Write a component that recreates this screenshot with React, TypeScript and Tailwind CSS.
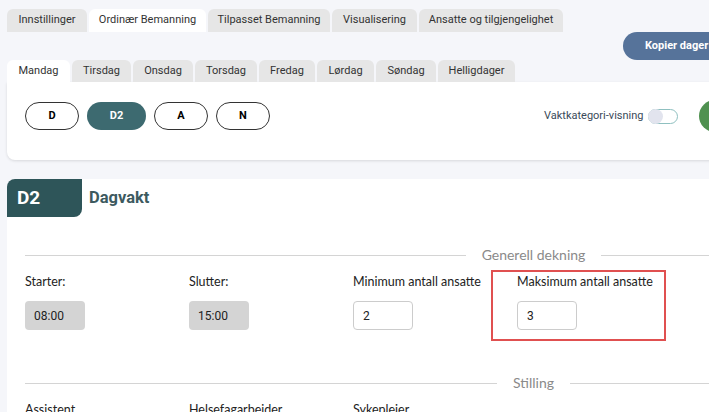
import React from 'react';

const topTabs = [
    { label: 'Innstillinger', w: 'w-[80px]' },
    { label: 'Ordinær Bemanning', w: 'w-[117px]' },
    { label: 'Tilpasset Bemanning', w: 'w-[122px]' },
    { label: 'Visualisering', w: 'w-[85px]' },
    { label: 'Ansatte og tilgjengelighet', w: 'w-[144px]' },
];
const dayTabs = [
    { label: 'Mandag', w: 'w-[63px]' },
    { label: 'Tirsdag', w: 'w-[59px]' },
    { label: 'Onsdag', w: 'w-[60px]' },
    { label: 'Torsdag', w: 'w-[62px]' },
    { label: 'Fredag', w: 'w-[56px]' },
    { label: 'Lørdag', w: 'w-[57px]' },
    { label: 'Søndag', w: 'w-[60px]' },
    { label: 'Helligdager', w: 'w-[77px]' },
];
const shifts = ['D', 'D2', 'A', 'N'];

function SectionTitle({ title }: { title: string }) {
    return (
        <div className="flex items-center gap-4 h-[14px]">
            <div className="flex-1 h-px bg-[#d4d4d4]" />
            <span className="text-[14px] text-[#8a8a8a] leading-none">{title}</span>
            <div className="flex-1 h-px bg-[#d4d4d4]" />
        </div>
    );
}

function Field({ label, value, disabled }: { label: string; value: string; disabled?: boolean }) {
    return (
        <>
            <div className="text-[12.5px] text-[#222] h-[18px] leading-[18px] whitespace-nowrap">{label}</div>
            <div
                className={`mt-[10px] w-[60px] h-[29px] rounded flex items-center pl-[9px] text-[12px] text-[#222] font-['Roboto',sans-serif] ${disabled ? 'bg-[#d4d4d4]' : 'border border-[#ccc]'}`}
            >
                {value}
            </div>
        </>
    );
}

export default function App() {
    return (
        <div className="w-full h-[412px] overflow-hidden bg-[#f5f6fa]">
            <div className="w-[1060px] pl-[7px] pt-[9px] font-['Roboto',sans-serif]">
                {/* Top tabs */}
                <div className="flex gap-[2px]">
                    {topTabs.map((t, i) => (
                        <div
                            key={t.label}
                            className={`${t.w} h-[23px] flex items-center justify-center rounded-t-md text-[11px] text-[#333] whitespace-nowrap ${i === 1 ? 'bg-white' : 'bg-[#e6e6e6]'}`}
                        >
                            {t.label}
                        </div>
                    ))}
                </div>

                {/* Action button row */}
                <div className="h-[28px] flex">
                    <button className="ml-[616px] h-[28px] w-[200px] rounded-full bg-[#56739a] text-white text-[11px] font-bold text-left pl-[22px]">
                        Kopier dager og vakter
                    </button>
                </div>

                {/* Day tabs */}
                <div className="flex gap-[2px]">
                    {dayTabs.map((t, i) => (
                        <div
                            key={t.label}
                            className={`${t.w} h-[22px] flex items-center justify-center rounded-t-md text-[11px] text-[#333] ${i === 0 ? 'bg-white' : 'bg-[#e6e6e6]'}`}
                        >
                            {t.label}
                        </div>
                    ))}
                </div>

                {/* Shift selector panel */}
                <div className="h-[78px] bg-white rounded-b-lg rounded-tr-lg shadow-[0_1px_3px_rgba(0,0,0,0.12)] pl-[18px] pt-[20px] flex items-start">
                    <div className="flex gap-[8px]">
                        {shifts.map((s) => (
                            <div
                                key={s}
                                className={`h-[28px] rounded-full flex items-center justify-center text-[11px] font-bold ${s === 'D2' ? 'w-[59px] bg-[#3d6a70] text-white' : 'w-[54px] border border-[#333] text-black'}`}
                            >
                                {s}
                            </div>
                        ))}
                    </div>
                    <div className="ml-[274px] h-[28px] flex items-center">
                        <span className="w-[94px] text-[11px] text-[#3a4a5a] whitespace-nowrap">Vaktkategori-visning</span>
                        <div className="ml-[10px] w-[30px] h-[15px] rounded-full border border-[#8fc0c0] relative">
                            <div className="absolute left-[-1px] top-[-1px] w-[15px] h-[15px] rounded-full bg-[#e2e4ee]" />
                        </div>
                        <div className="ml-[21px] w-[32px] h-[32px] rounded-full bg-[#4f9150] shrink-0" />
                    </div>
                </div>

                {/* Shift detail card */}
                <div className="mt-[19px] bg-white rounded-tl-lg h-[300px] font-['Lato',sans-serif]">
                    <div className="flex items-center">
                        <div className="w-[75px] h-[38px] bg-[#2e5559] rounded-tl-lg rounded-br-lg flex items-center pl-[10px] text-white text-[19px] font-bold font-['Roboto',sans-serif]">
                            D2
                        </div>
                        <span className="ml-[7px] text-[16.5px] font-bold text-[#3d5a5f] font-['Roboto',sans-serif]">Dagvakt</span>
                    </div>

                    <div className="pl-[18px] pr-[18px]">
                        <div className="mt-[31px]">
                            <SectionTitle title="Generell dekning" />
                        </div>

                        <div className="flex mt-[11px]">
                            <div className="w-[164px]">
                                <Field label="Starter:" value="08:00" disabled />
                            </div>
                            <div className="w-[164px]">
                                <Field label="Slutter:" value="15:00" disabled />
                            </div>
                            <div className="w-[138px]">
                                <Field label="Minimum antall ansatte" value="2" />
                            </div>
                            <div className="-mt-[3px] w-[175px] h-[71px] border-2 border-[#e05050] pl-[24px] pt-[1px]">
                                <Field label="Maksimum antall ansatte" value="3" />
                            </div>
                        </div>

                        <div className="mt-[35px]">
                            <SectionTitle title="Stilling" />
                        </div>

                        <div className="flex mt-[11px] text-[12.5px] text-[#222]">
                            <div className="w-[164px]">Assistent</div>
                            <div className="w-[164px]">Helsefagarbeider</div>
                            <div className="w-[164px]">Sykepleier</div>
                        </div>
                    </div>
                </div>
            </div>
        </div>
    );
}
